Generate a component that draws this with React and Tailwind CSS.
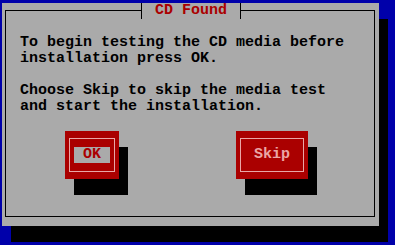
import React from 'react'

const Button = ({ label, focused, width }) => (
  <div className={`${width} h-[48px] bg-[#aa0000] shadow-[9px_16px_0_#000] px-[4px] py-[7px]`}>
    <div className="h-full border border-[#eaa6a6] flex items-center justify-center">
      <span
        className={
          focused
            ? 'h-[16px] px-[9px] bg-[#aaaaaa] text-[#aa0000] leading-[16px]'
            : 'h-[16px] px-[9px] text-[#eaa6a6] leading-[16px]'
        }
      >
        {label}
      </span>
    </div>
  </div>
)

export default function App() {
  return (
    <div
      className="w-[395px] h-[245px] bg-[#0000aa] pt-[3px] pl-[2px] overflow-hidden text-[15px] font-bold leading-[16px]"
      style={{ fontFamily: '"Liberation Mono", "DejaVu Sans Mono", monospace' }}
    >
      <div className="w-[377px] h-[223px] bg-[#aaaaaa] shadow-[9px_16px_0_#000] pl-[3px] pr-[4px] pt-[7px] pb-[9px]">
        <div className="relative h-full border border-black pl-[14px] pt-[24px]">
          {/* title breaks the top line */}
          <div className="absolute left-[135px] top-[-8px] w-[100px] h-[16px] bg-[#aaaaaa] border-x border-black flex justify-center text-[#aa0000]">
            CD Found
          </div>

          <div className="text-black whitespace-pre">
            <p>To begin testing the CD media before</p>
            <p>installation press OK.</p>
            <p className="mt-[16px]">Choose Skip to skip the media test</p>
            <p>and start the installation.</p>
          </div>

          <div className="flex mt-[16px] pl-[45px] gap-[117px]">
            <Button label="OK" focused width="w-[54px]" />
            <Button label="Skip" width="w-[72px]" />
          </div>
        </div>
      </div>
    </div>
  )
}
